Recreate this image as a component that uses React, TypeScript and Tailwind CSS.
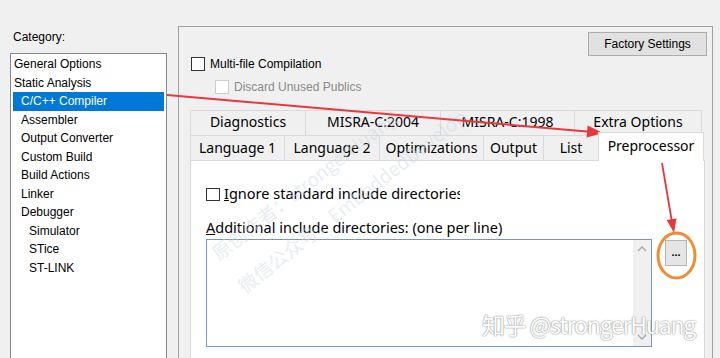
import React from 'react'

const ui = "font-['Liberation_Sans',Arial,sans-serif]"
const seg = "font-['Noto_Sans','Open_Sans',sans-serif]"

type Item = { label: string; level: number; selected?: boolean }

const items: Item[] = [
  { label: 'General Options', level: 0 },
  { label: 'Static Analysis', level: 0 },
  { label: 'C/C++ Compiler', level: 1, selected: true },
  { label: 'Assembler', level: 1 },
  { label: 'Output Converter', level: 1 },
  { label: 'Custom Build', level: 1 },
  { label: 'Build Actions', level: 1 },
  { label: 'Linker', level: 1 },
  { label: 'Debugger', level: 1 },
  { label: 'Simulator', level: 2 },
  { label: 'STice', level: 2 },
  { label: 'ST-LINK', level: 2 },
]

const topTabs = [
  { label: 'Diagnostics', w: 'w-[115px]' },
  { label: 'MISRA-C:2004', w: 'w-[135px]' },
  { label: 'MISRA-C:1998', w: 'w-[134px]' },
  { label: 'Extra Options', w: 'w-[128px]' },
]

const bottomTabs = [
  { label: 'Language 1', w: 'w-[94px]' },
  { label: 'Language 2', w: 'w-[95px]' },
  { label: 'Optimizations', w: 'w-[104px]' },
  { label: 'Output', w: 'w-[60px]' },
  { label: 'List', w: 'w-[55px]' },
]

const Check: React.FC<{ disabled?: boolean; size?: string }> = ({ disabled, size = 'w-[14px] h-[14px]' }) => (
  <span className={`${size} shrink-0 bg-white border ${disabled ? 'border-[#cccccc]' : 'border-[#333333]'}`} />
)

const Overlay: React.FC = () => (
  <svg className="absolute inset-0 pointer-events-none" width={720} height={358} viewBox="0 0 720 358">
    <line x1={167} y1={95} x2={590} y2={131.8} stroke="#e8383d" strokeWidth={2} />
    <polygon points="603,133 586.6,137.6 587.6,125.6" fill="#e8383d" />
    <line x1={662} y1={163} x2={671.8} y2={221} stroke="#e8383d" strokeWidth={1.8} />
    <polygon points="674,233 666.7,220 676.5,218.4" fill="#e8383d" />
    <ellipse cx={676.5} cy={255.5} rx={18.5} ry={22.5} fill="none" stroke="#ef8c34" strokeWidth={3} />
  </svg>
)

export default function App() {
  return (
    <div className={`relative w-[720px] h-[358px] overflow-hidden bg-[#f0f0f0] flex text-black ${ui}`}>
      {/* left: category tree */}
      <div className="w-[178px] shrink-0 pl-[10px] pt-[30px]">
        <div className="text-[12px] leading-[15px] pl-[3px]">Category:</div>
        <div className="mt-[8px] w-[157px] h-[400px] bg-white border border-[#828790] pt-[1px] px-[1px]">
          {items.map(it => (
            <div
              key={it.label}
              className={`h-[18.5px] flex items-center text-[12px] mx-[1px] ${it.selected ? 'bg-[#0078d7] text-white' : ''}`}
            >
              <span className={it.level === 0 ? 'pl-[1px]' : it.level === 1 ? 'pl-[8px]' : 'pl-[16px]'}>{it.label}</span>
            </div>
          ))}
        </div>
      </div>

      {/* right: options panel */}
      <div className="mt-[26px] w-[535px] h-[400px] shrink-0 border-l border-t border-r border-[#a0a0a0]">
        <div className="flex justify-end pt-[5px] pr-[5px]">
          <button className="w-[119px] h-[24px] bg-[#e1e1e1] border border-[#adadad] text-[12px]">Factory Settings</button>
        </div>
        <div className="flex items-center gap-[5px] pl-[12px] h-[15px] text-[12px]">
          <Check />
          <span>Multi-file Compilation</span>
        </div>
        <div className="flex items-center gap-[5px] pl-[36px] mt-[8px] h-[15px] text-[12px] text-[#8a8a8a]">
          <Check disabled />
          <span>Discard Unused Publics</span>
        </div>

        {/* tab strip */}
        <div className={`ml-[11px] mt-[16px] text-[14px] ${seg}`}>
          <div className="flex h-[25px]">
            {topTabs.map((t, i) => (
              <div
                key={t.label}
                className={`${t.w} h-full flex items-center justify-center pb-[3px] border-t border-l border-[#d9d9d9] ${i === topTabs.length - 1 ? 'border-r' : ''}`}
              >
                {t.label}
              </div>
            ))}
          </div>
          <div className="flex h-[25px] items-end">
            {bottomTabs.map(t => (
              <div key={t.label} className={`${t.w} h-full flex items-center justify-center pb-[2px] border-t border-l border-[#d9d9d9]`}>
                {t.label}
              </div>
            ))}
            <div className="relative z-10 w-[106px] h-[29px] -mb-[1px] bg-white border-t border-l border-r border-[#d9d9d9] flex items-center justify-center pb-[3px]">
              Preprocessor
            </div>
          </div>

          <div className="w-[515px] h-[220px] bg-white border border-[#d9d9d9] pl-[15px] pt-[26px] text-[14.5px]">
            <div className="flex items-center h-[14px]">
              <Check size="w-[14px] h-[13px]" />
              <span className="ml-[4px] w-[236px] overflow-hidden whitespace-nowrap">
                <span className="underline">I</span>gnore standard include directories
              </span>
            </div>
            <div className="mt-[17px] leading-[18px]">
              <span className="underline">A</span>dditional include directories: (one per line)
            </div>
            <div className="flex items-start mt-[3px]">
              <div className="w-[446px] h-[108px] border border-[#7a98b4] flex justify-end">
                <div className="w-[18px] h-full bg-[#f0f0f0] flex flex-col items-center justify-between py-[6px]">
                  <svg width="10" height="6" viewBox="0 0 10 6"><path d="M1 5 L5 1 L9 5" fill="none" stroke="#a6a6a6" strokeWidth="1.3" /></svg>
                  <svg width="10" height="6" viewBox="0 0 10 6"><path d="M1 1 L5 5 L9 1" fill="none" stroke="#a6a6a6" strokeWidth="1.3" /></svg>
                </div>
              </div>
              <button className={`ml-[13px] mt-[1px] w-[22px] h-[26px] bg-[#e5e5e5] border border-[#b5b5b5] text-[11px] font-bold leading-none pb-[2px] ${ui}`}>...</button>
            </div>
          </div>
        </div>
      </div>

      {/* faint diagonal watermarks */}
      <div className="absolute left-[214px] top-[244px] -rotate-[38deg] origin-left text-[19px] leading-[22px] text-[#cdd8e4] opacity-45 whitespace-nowrap font-['Noto_Sans_CJK_SC',sans-serif] pointer-events-none">
        原创作者：strongerHuang
      </div>
      <div className="absolute left-[240px] top-[277px] -rotate-[38deg] origin-left text-[19px] leading-[22px] text-[#cdd8e4] opacity-45 whitespace-nowrap font-['Noto_Sans_CJK_SC',sans-serif] pointer-events-none">
        微信公众号：EmbeddedDevelop
      </div>

      <Overlay />

      {/* site watermark */}
      <div className="absolute left-[482px] top-[308px] text-[23px] leading-[32px] tracking-[-1.2px] text-white whitespace-nowrap font-['Noto_Sans_CJK_SC','Noto_Sans',sans-serif] [text-shadow:0_0_1px_#8a8a8a,0_0_2px_#9a9a9a] pointer-events-none">
        知乎 @strongerHuang
      </div>
    </div>
  )
}
